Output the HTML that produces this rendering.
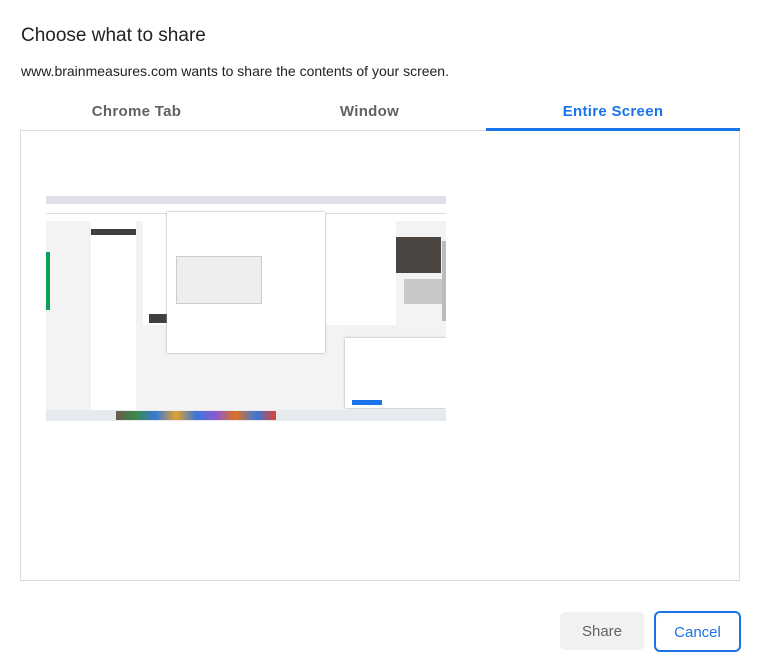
<!DOCTYPE html>
<html><head><style>
body{margin:0;width:759px;height:658px;background:#fff;font-family:"Liberation Sans",sans-serif;position:relative;overflow:hidden}
.a{position:absolute}
</style></head><body>
<div class="a" style="left:21px;top:25px;font-size:19px;color:#202124">Choose what to share</div>
<div class="a" style="left:21px;top:63px;font-size:14px;color:#202124">www.brainmeasures.com wants to share the contents of your screen.</div>
<div class="a" style="left:20px;top:103px;width:233px;text-align:center;font-size:15px;font-weight:bold;color:#5f6368;letter-spacing:0.3px">Chrome Tab</div>
<div class="a" style="left:253px;top:103px;width:233px;text-align:center;font-size:15px;font-weight:bold;color:#5f6368;letter-spacing:0.3px">Window</div>
<div class="a" style="left:486px;top:103px;width:254px;text-align:center;font-size:15px;font-weight:bold;color:#1a73e8;letter-spacing:0.3px">Entire Screen</div>
<div class="a" style="left:20px;top:130px;width:720px;height:1px;background:#dadce0"></div>
<div class="a" style="left:486px;top:128px;width:254px;height:3px;background:#1a73e8"></div>
<div class="a" style="left:20px;top:131px;width:718px;height:449px;border:1px solid #dadce0;border-top:none"></div>

<div class="a" style="left:46px;top:196px;width:400px;height:225px;background:#f3f3f3;overflow:hidden">
 <div class="a" style="left:0;top:0;width:400px;height:8px;background:#dee1e6"></div>
 <div class="a" style="left:0;top:8px;width:400px;height:9px;background:#fff;border-bottom:1px solid #ddd"></div>
 <div class="a" style="left:0;top:18px;width:400px;height:7px;background:#fff"></div>
 <div class="a" style="left:45px;top:25px;width:45px;height:190px;background:#fff"></div>
 <div class="a" style="left:45px;top:33px;width:45px;height:6px;background:#3c4043"></div>
 <div class="a" style="left:0;top:56px;width:4px;height:58px;background:#0f9d58"></div>
 <div class="a" style="left:97px;top:25px;width:253px;height:104px;background:#fff"></div>
 <div class="a" style="left:103px;top:118px;width:18px;height:9px;background:#3c4043"></div>
 <div class="a" style="left:350px;top:41px;width:45px;height:36px;background:#4a4540"></div>
 <div class="a" style="left:358px;top:83px;width:42px;height:25px;background:#c8c8c8"></div>
 <div class="a" style="left:396px;top:45px;width:4px;height:80px;background:#bbb"></div>
 <div class="a" style="left:121px;top:16px;width:158px;height:141px;background:#fff;box-shadow:0 0 2px #999"></div>
 <div class="a" style="left:130px;top:60px;width:84px;height:46px;background:#eee;border:1px solid #ccc"></div>
 <div class="a" style="left:299px;top:142px;width:101px;height:70px;background:#fff;box-shadow:0 0 2px #999"></div>
 <div class="a" style="left:306px;top:204px;width:30px;height:5px;background:#1a73e8"></div>
 <div class="a" style="left:0;top:214px;width:400px;height:11px;background:#e6e9ee"></div>
 <div class="a" style="left:70px;top:215px;width:160px;height:9px;background:linear-gradient(90deg,#6a5a4a,#3a8a4a,#3b78d8,#e0a030,#3b78d8,#8a5ad0,#e07020,#3b78d8,#e04030)"></div>
</div>

<div class="a" style="left:560px;top:612px;width:84px;height:38px;background:#f1f1f1;border-radius:5px;font-size:15px;color:#5f6368;text-align:center;line-height:40px">Share</div>
<div class="a" style="left:654px;top:611px;width:83px;height:37px;border:2px solid #1a73e8;border-radius:6px;font-size:15px;color:#1a73e8;text-align:center;line-height:40px">Cancel</div>
</body></html>
